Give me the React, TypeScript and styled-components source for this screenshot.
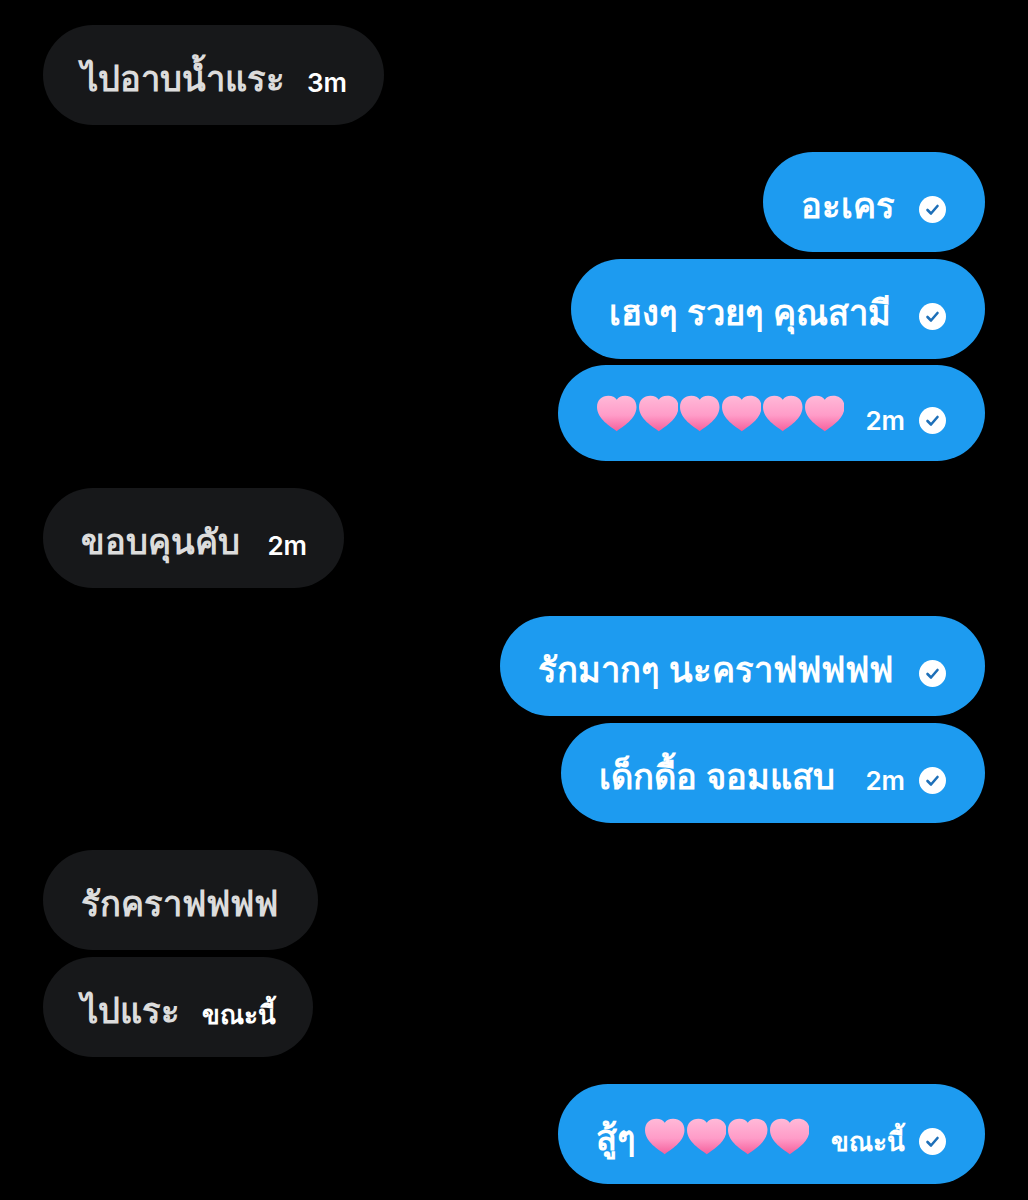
import { createGlobalStyle } from 'styled-components'
import styled from 'styled-components'

const GlobalStyle = createGlobalStyle`
	html, body {
		margin: 0;
		background: #000;
	}
`

const Heart = ({ id }: { id: string }) => (
	<HeartIcon viewBox="0 0 40 37">
		<defs>
			<linearGradient id={id} x1="0" y1="0" x2="0" y2="1">
				<stop offset="0" stopColor="#ffb9d8" />
				<stop offset="0.55" stopColor="#ff9cc8" />
				<stop offset="1" stopColor="#f5609c" />
			</linearGradient>
		</defs>
		<path
			d="M20 36.500C14 32 0 24 0 12 0 4.500 5 .5 11.500 .5c4 0 6.800 1.500 8.500 4 1.700-2.500 4.500-4 8.500-4C35 .5 40 4.500 40 12c0 12-14 20-20 24.500Z"
			fill={`url(#${id})`}
		/>
	</HeartIcon>
)

const SeenCheck = () => (
	<CheckIcon viewBox="0 0 27 27">
		<circle cx="13.500" cy="13.500" r="13.500" fill="#fff" />
		<path d="M8.500 14l3.500 3.500 6.500-7.500" fill="none" stroke="#1d6fb8" strokeWidth="2.600" strokeLinecap="round" strokeLinejoin="round" />
	</CheckIcon>
)

const App = () => {
	return (
		<Page>
			<GlobalStyle />
			<Group>
				<Theirs $width={341}>
					<Message>ไปอาบน้ำแระ</Message>
					<Time>3m</Time>
				</Theirs>
			</Group>
			<Group>
				<Mine $width={222}>
					<Message>อะเคร</Message>
					<SeenCheck />
				</Mine>
				<Mine $width={414}>
					<Message>เฮงๆ รวยๆ คุณสามี</Message>
					<SeenCheck />
				</Mine>
				<Mine $width={427} $short>
					<HeartRow>
						{['a', 'b', 'c', 'd', 'e', 'f'].map((k) => (
							<Heart key={k} id={`row-${k}`} />
						))}
					</HeartRow>
					<Time>2m</Time>
					<SeenCheck />
				</Mine>
			</Group>
			<Group>
				<Theirs $width={301}>
					<Message>ขอบคุนคับ</Message>
					<Time>2m</Time>
				</Theirs>
			</Group>
			<LowerGroup>
				<Mine $width={485}>
					<Message>รักมากๆ นะคราฟฟฟฟฟ</Message>
					<SeenCheck />
				</Mine>
				<Mine $width={424}>
					<Message>เด็กดื้อ จอมแสบ</Message>
					<Time>2m</Time>
					<SeenCheck />
				</Mine>
			</LowerGroup>
			<Group>
				<Theirs $width={275}>
					<Message>รักคราฟฟฟฟ</Message>
				</Theirs>
				<Theirs $width={270}>
					<Message>ไปแระ</Message>
					<ThaiTime>ขณะนี้</ThaiTime>
				</Theirs>
			</Group>
			<Group>
				<Mine $width={427}>
					<LeadMessage>สู้ๆ</LeadMessage>
					<TrailingHearts>
						{['a', 'b', 'c', 'd'].map((k) => (
							<Heart key={k} id={`last-${k}`} />
						))}
					</TrailingHearts>
					<ThaiTime>ขณะนี้</ThaiTime>
					<SeenCheck />
				</Mine>
			</Group>
		</Page>
	)
}

export default App

const Page = styled.div`
	display: flex;
	flex-direction: column;
	gap: 27px;
	box-sizing: border-box;
	width: 1028px;
	height: 1200px;
	padding: 25px 43px 0;
	overflow: hidden;
	background: #000;
	font-family: "Noto Sans", "DejaVu Sans", "Liberation Sans", sans-serif;
`

const Group = styled.div`
	display: flex;
	flex-direction: column;
	gap: 7px;
`

const LowerGroup = styled(Group)`
	margin-top: 1px;
`

const Bubble = styled.div<{ $width: number; $short?: boolean }>`
	display: flex;
	align-items: center;
	box-sizing: border-box;
	width: ${(p) => p.$width}px;
	height: ${(p) => (p.$short ? 96 : 100)}px;
	margin-top: ${(p) => (p.$short ? -1 : 0)}px;
	padding: 0 39px 0 38px;
	border-radius: 50px;
`

const Theirs = styled(Bubble)`
	align-self: flex-start;
	padding-right: 37px;
	background: #17181a;
	color: #dcdcdc;
`

const Mine = styled(Bubble)`
	align-self: flex-end;
	justify-content: flex-end;
	background: #1d9bf0;
	color: #fff;
`

const Message = styled.span`
	margin: 6px auto 0 0;
	font-size: 34.500px;
	font-weight: 700;
	white-space: nowrap;
`

const LeadMessage = styled(Message)`
	margin-right: 0;
`

const Time = styled.span`
	margin: 14px 0 0 18px;
	font-family: "Inter", "Liberation Sans", sans-serif;
	font-size: 26px;
	font-weight: 600;
	color: #fff;
	white-space: nowrap;
`

const ThaiTime = styled(Time)`
	font-family: "Noto Sans", "DejaVu Sans", sans-serif;
	font-weight: 700;
`

const HeartRow = styled.div`
	display: flex;
	gap: 2px;
	margin: 1px auto 0 1px;
`

const TrailingHearts = styled(HeartRow)`
	margin: 4px auto 0 9px;
`

const HeartIcon = styled.svg`
	display: block;
	width: 39.500px;
	height: 37px;
`

const CheckIcon = styled.svg`
	flex: none;
	width: 27px;
	height: 27px;
	margin: 14px 0 0 14px;
`
